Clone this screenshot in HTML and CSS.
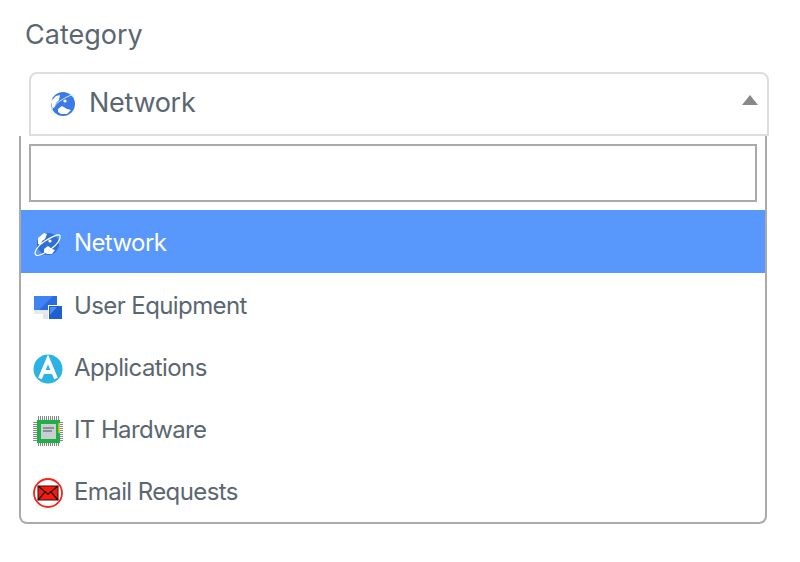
FILE: index.html
```html
<!DOCTYPE html>
<html lang="en">
<head>
  <meta charset="UTF-8" />
  <title>Category</title>
  <link rel="stylesheet" href="styles.css">
</head>
<body>
  <label class="field-label">Category</label>

  <div class="selection">
    <svg class="sel-icon" viewBox="0 0 30 30" width="30" height="30">
      <circle cx="15" cy="15" r="12" fill="#3b7be8"/>
      <path d="M3 12l5-5 4-1-1 5-3 3-1 4-3 1z" fill="#fff"/>
      <path d="M10 20l4-3 5 3 4 1-4 4h-6l-3-2z" fill="#fff"/>
      <circle cx="17" cy="12" r="1.6" fill="#fff"/>
      <path d="M4 25c-3-2 2-9 8-13s14-8 15-5" fill="none" stroke="#dfe8fa" stroke-width="1"/>
    </svg>
    <span class="sel-text">Network</span>
    <span class="arrow"></span>
  </div>

  <div class="dropdown">
    <div class="search-wrap">
      <input class="search" type="text" />
    </div>
    <ul class="options">
      <li class="option active">
        <svg class="opt-icon" viewBox="0 0 30 30" width="30" height="30">
          <circle cx="15" cy="15" r="11" fill="#2f6fd8"/>
          <path d="M5 9l6-5 3 1-2 5-3 2-1 4-3-1z" fill="#fff"/>
          <path d="M11 20l4-3 4 3 3 1-3 4h-5l-3-2z" fill="#fff"/>
          <circle cx="17" cy="12" r="1.6" fill="#fff"/>
          <path d="M3 26c-3-2 2-10 9-14s14-8 15-5c1 3-3 9-9 13s-13 8-15 6z" fill="none" stroke="#fff" stroke-width="1.2"/>
        </svg>
        <span class="opt-text">Network</span>
      </li>
      <li class="option">
        <svg class="opt-icon" viewBox="0 0 30 30" width="30" height="30">
          <path d="M1 4h23v14H1z" fill="#2a6be0"/>
          <path d="M1 4h19L6 18H1z" fill="#3f84f2"/>
          <path d="M1 18h16v4H1z" fill="#e4e9f2"/>
          <path d="M10 22h5v5h-5z" fill="#e2e4e8"/>
          <path d="M15 13h15v15H15z" fill="#fff"/>
          <path d="M16 14h13v13H16z" fill="#1f5fd0"/>
          <path d="M17 15h7l-7 8z" fill="#4f8cf0"/>
        </svg>
        <span class="opt-text">User Equipment</span>
      </li>
      <li class="option">
        <svg class="opt-icon" viewBox="0 0 30 30" width="30" height="30">
          <circle cx="15" cy="15" r="14.5" fill="#2cb3e3"/>
          <path d="M7 24.500L15 5.500l8 19M10.500 18h9" fill="none" stroke="#fff" stroke-width="3.800"/>
        </svg>
        <span class="opt-text">Applications</span>
      </li>
      <li class="option">
        <svg class="opt-icon" viewBox="0 0 30 30" width="30" height="30">
          <path d="M5 2h21M5 29h21" fill="none" stroke="#85898d" stroke-width="4" stroke-dasharray="1 1"/>
          <path d="M2 6v19M29 6v19" fill="none" stroke="#85898d" stroke-width="4" stroke-dasharray="1 1"/>
          <rect x="4" y="4" width="23" height="23" fill="#1fb045"/>
          <rect x="8" y="8" width="15" height="15" fill="#c9ced2"/>
          <path d="M10 12h11M10 15h9" stroke="#555" stroke-width="1.200"/>
          <rect x="25.400" y="7" width="1.600" height="10" fill="#e3c832"/>
        </svg>
        <span class="opt-text">IT Hardware</span>
      </li>
      <li class="option">
        <svg class="opt-icon" viewBox="0 0 30 30" width="30" height="30">
          <circle cx="15" cy="15" r="14" fill="#fff" stroke="#f8231a" stroke-width="1.800"/>
          <rect x="5" y="8" width="20" height="14" fill="#fb1a10"/>
          <path d="M5 8l10 8 10-8M5 22l7-8M25 22l-7-8" fill="none" stroke="#2b1210" stroke-width="1.400"/>
          <rect x="5" y="8" width="20" height="14" fill="none" stroke="#2b1210" stroke-width="1"/>
        </svg>
        <span class="opt-text">Email Requests</span>
      </li>
    </ul>
  </div>
</body>
</html>
```

FILE: styles.css
```css
* { box-sizing: border-box; margin: 0; padding: 0; }
body {
  font-family: Inter, 'Liberation Sans', sans-serif;
  color: #5b6770;
  background: #fff;
  padding: 18px 33px 0 19px;
}
.field-label {
  display: block;
  height: 34px;
  margin-left: 6px;
  font-size: 27px;
  line-height: 34px;
}
.selection {
  display: flex;
  align-items: center;
  height: 64px;
  margin: 20px -2px 0 10px;
  padding: 0 9px 0 17px;
  border: 2px solid #ddd;
  border-radius: 8px 8px 0 0;
}
.sel-icon { flex: none; width: 30px; height: 30px; }
.sel-text {
  margin: 0 0 4px 11px;
  font-size: 27px;
  letter-spacing: -0.3px;
}
.arrow {
  margin: 0 0 8px auto;
  width: 0;
  height: 0;
  border-left: 8px solid transparent;
  border-right: 8px solid transparent;
  border-bottom: 10px solid #888;
}
.dropdown {
  border: 2px solid #aaa;
  border-top: none;
  border-radius: 0 0 8px 8px;
  overflow: hidden;
}
.search-wrap { padding: 8px; }
.search {
  display: block;
  width: 728px;
  height: 58px;
  border: 2px solid #aaa;
  outline: none;
}
.options { list-style: none; }
.option {
  display: flex;
  align-items: center;
  gap: 11px;
  height: 62.2px;
  padding-left: 12px;
  font-size: 24px;
  letter-spacing: -0.6px;
}
.option.active {
  height: 63px;
  background: #5897fb;
  color: #fff;
}
.opt-icon { flex: none; width: 30px; height: 30px; margin-top: 5px; }
.opt-text { margin-top: 2px; }
```
